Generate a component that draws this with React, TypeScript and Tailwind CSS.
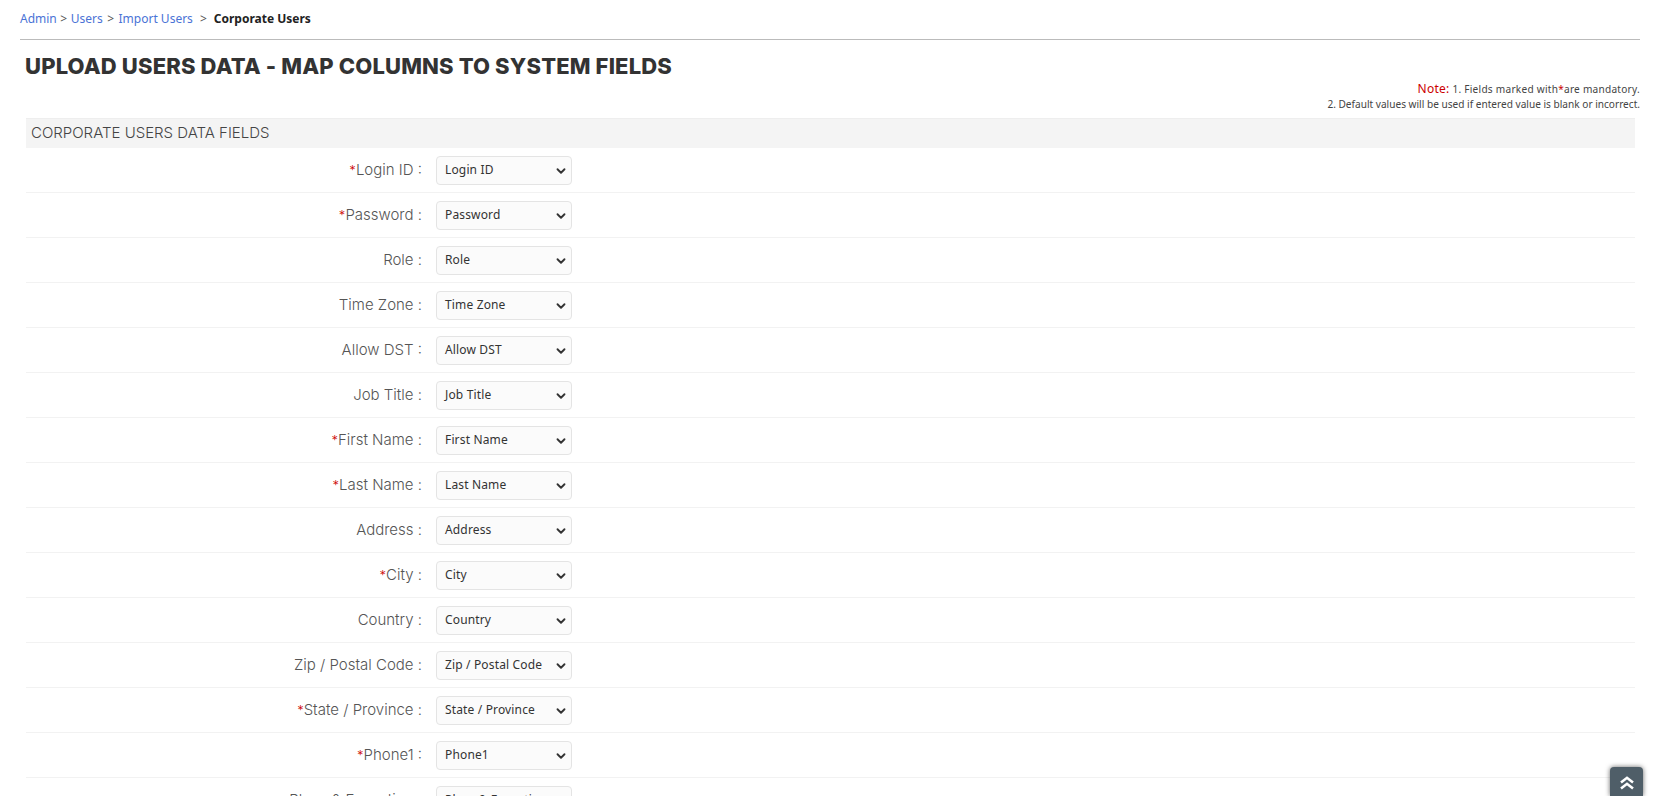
import { ChevronDown } from 'lucide-react';

const fields = [
  { label: 'Login ID', required: true },
  { label: 'Password', required: true },
  { label: 'Role' },
  { label: 'Time Zone' },
  { label: 'Allow DST' },
  { label: 'Job Title' },
  { label: 'First Name', required: true },
  { label: 'Last Name', required: true },
  { label: 'Address' },
  { label: 'City', required: true },
  { label: 'Country' },
  { label: 'Zip / Postal Code' },
  { label: 'State / Province', required: true },
  { label: 'Phone1', required: true },
  { label: 'Place & Execution' },
];

function FieldRow({ label, required }: { label: string; required?: boolean }) {
  return (
    <div className="flex h-[45px] shrink-0 items-center border-b border-[#f2f2f2]">
      <label className="w-[396px] pt-[1px] text-right font-['Inter',sans-serif] text-[15px] font-light text-[#555]">
        {required && <span className="text-[13px] text-[#c00]">*</span>}
        {label} :
      </label>
      <div className="relative ml-[14px] flex h-[29px] w-[136px] items-center rounded border border-[#e4e4e4] bg-[#fbfbfb] pb-[1px] pl-[8px] font-['Noto_Sans',sans-serif] text-[12px] tracking-[0.15px] text-[#333]">
        {label}
        <ChevronDown className="absolute right-[3px] top-[7px] h-[14px] w-[14px] text-[#333]" strokeWidth={3.2} />
      </div>
    </div>
  );
}

export default function App() {
  return (
    <div className="h-[796px] overflow-hidden bg-white">
      <div className="px-5 pt-[9px]">
        <div className="flex h-[19px] items-center font-['Noto_Sans',sans-serif] text-[12px] text-[#555]">
          <a className="text-[#4a73d6]">Admin</a>
          <span className="mx-[3.5px]">&gt;</span>
          <a className="text-[#4a73d6]">Users</a>
          <span className="mx-[4.5px]">&gt;</span>
          <a className="text-[#4a73d6]">Import Users</a>
          <span className="mx-[7px]">&gt;</span>
          <span className="font-bold text-[#222]">Corporate Users</span>
        </div>
        <div className="mt-[11px] mr-[-3px] border-t border-[#bbb]" />
      </div>
      <div className="pr-[17px] pl-[25px]">
        <h1 className="mt-[11px] font-['Inter',sans-serif] text-[22px] leading-[30px] font-extrabold tracking-[0.15px] text-[#333]">
          UPLOAD USERS DATA - MAP COLUMNS TO SYSTEM FIELDS
        </h1>
        <div className="pt-[1px] text-right font-['Noto_Sans',sans-serif] text-[10.1px] leading-[15px] text-[#444]">
          <p className="tracking-[0.25px]">
            <span className="text-[12px] leading-none text-[#c00]">Note:</span> 1. Fields marked with
            <span className="text-[#c00]">*</span>are mandatory.
          </p>
          <p>2. Default values will be used if entered value is blank or incorrect.</p>
        </div>
      </div>
      <div className="mt-[6px] ml-[26px] w-[1609px]">
        <div className="flex h-[30px] items-center border-t border-[#eee] bg-[#f4f4f4] pl-[5px] font-['Inter',sans-serif] text-[15px] font-light text-[#444]">
          CORPORATE USERS DATA FIELDS
        </div>
        {fields.map((f) => (
          <FieldRow key={f.label} label={f.label} required={f.required} />
        ))}
      </div>
      <button className="fixed right-[14px] bottom-0 flex h-[29px] w-[33px] items-start justify-center rounded-t bg-[#4f5e68] pt-[9px] text-white shadow-[0_0_5px_rgba(0,0,0,0.6)]">
        <svg viewBox="0 0 14 14" className="h-[14px] w-[14px]" fill="none" stroke="currentColor" strokeWidth="2.6">
          <path d="M1 6.5 7 1.8l6 4.7" />
          <path d="M1 12.5 7 7.8l6 4.7" />
        </svg>
      </button>
    </div>
  );
}
